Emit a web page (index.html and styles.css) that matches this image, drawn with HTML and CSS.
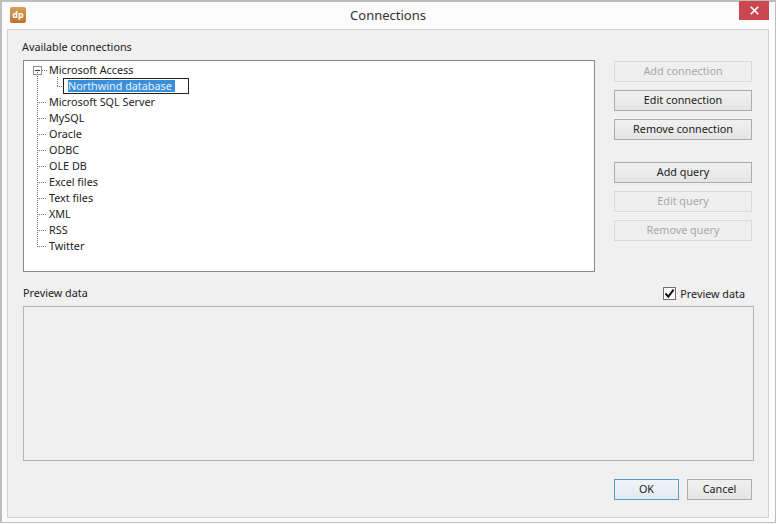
FILE: index.html
```html
<!DOCTYPE html>
<html lang="en">

<head>
	<meta charset="UTF-8">
	<meta name="viewport" content="width=device-width, initial-scale=1.0">
	<title>Connections</title>
	<link rel="stylesheet" href="styles.css">
</head>

<body>
	<div class="window">
		<header class="titlebar">
			<div class="app-icon">dp</div>
			<h1>Connections</h1>
			<div class="close-btn">
				<svg width="9" height="9" viewBox="0 0 9 9"><path d="M0.7 0.7 L8.3 8.3 M8.3 0.7 L0.7 8.3" stroke="#fff" stroke-width="1.6" fill="none" /></svg>
			</div>
		</header>

		<main class="panel">
			<div class="group-label">Available connections</div>
			<div class="top-row">
				<div class="tree">
					<div class="tree-open">
						<span class="expander"></span>
						<span class="row-text">Microsoft Access</span>
					</div>
					<div class="tree-child">
						<span class="child-line"></span>
						<span class="edit-box"><span class="selected">Northwind database</span></span>
					</div>
					<ul class="tree-list">
						<li>Microsoft SQL Server</li>
						<li>MySQL</li>
						<li>Oracle</li>
						<li>ODBC</li>
						<li>OLE DB</li>
						<li>Excel files</li>
						<li>Text files</li>
						<li>XML</li>
						<li>RSS</li>
						<li>Twitter</li>
					</ul>
				</div>
				<div class="side-buttons">
					<button class="btn" disabled>Add connection</button>
					<button class="btn">Edit connection</button>
					<button class="btn">Remove connection</button>
					<button class="btn btn-gap">Add query</button>
					<button class="btn" disabled>Edit query</button>
					<button class="btn" disabled>Remove query</button>
				</div>
			</div>

			<div class="preview-head">
				<span>Preview data</span>
				<label class="check-label">
					<span class="checkbox">
						<svg width="11" height="11" viewBox="0 0 11 11"><path d="M1.5 5.5 L4.3 8.6 L9.6 1.6" stroke="#111" stroke-width="2" fill="none" /></svg>
					</span>
					Preview data
				</label>
			</div>
			<div class="preview-box"></div>

			<div class="footer">
				<button class="btn btn-small btn-default">OK</button>
				<button class="btn btn-small">Cancel</button>
			</div>
		</main>
	</div>
</body>

</html>
```

FILE: styles.css
```css
* {
	box-sizing: border-box;
}

body {
	margin: 0;
	background: #fff;
	font-family: "Noto Sans", "Open Sans", sans-serif;
	font-size: 10.8px;
	color: #222;
}

.window {
	width: 776px;
	height: 523px;
	border: 1px solid #bdbdbd;
	border-top-width: 2px;
	border-left-width: 2px;
	background: #fbfbfb;
	display: flex;
	flex-direction: column;
	padding: 0 6px 4px 5px;
}

.titlebar {
	height: 27px;
	flex: none;
	display: grid;
	grid-template-columns: 1fr auto 1fr;
	align-items: start;
}

.titlebar h1 {
	margin: 5px 0 0;
	font-size: 13px;
	font-weight: 400;
	line-height: 17px;
	color: #333;
}

.app-icon {
	width: 16px;
	height: 16px;
	margin: 5px 0 0 3px;
	border-radius: 2px;
	background: linear-gradient(#d9a05f, #bf7326);
	color: #fff;
	font-size: 9px;
	font-weight: 700;
	line-height: 15px;
	text-align: center;
}

.close-btn {
	justify-self: end;
	width: 30px;
	height: 19px;
	margin-top: -1px;
	background: #c9484f;
	display: flex;
	align-items: center;
	justify-content: center;
}

.panel {
	flex: 1;
	background: #f0f0f0;
	border: 1px solid #d2d2d2;
	padding: 0 14px 0 15px;
	display: flex;
	flex-direction: column;
}

.group-label {
	margin: 8px 0 0 -1px;
	line-height: 17px;
	height: 22px;
}

.top-row {
	display: flex;
	gap: 19px;
}

.tree {
	width: 572px;
	height: 212px;
	border: 1px solid #8a8a8a;
	background: #fff;
	padding: 1px 0 0 9px;
	line-height: 16px;
}

.tree-open,
.tree-child {
	display: flex;
	height: 16px;
	align-items: center;
}

.expander {
	width: 9px;
	height: 9px;
	margin-right: 7px;
	border: 1px solid #8e8e8e;
	background: linear-gradient(#333, #333) center / 5px 1px no-repeat;
	flex: none;
	position: relative;
}

.expander::after {
	content: "";
	position: absolute;
	left: 8px;
	top: 3px;
	width: 6px;
	height: 1px;
	background: repeating-linear-gradient(90deg, #777 0 1px, transparent 1px 2px);
}

.tree-child {
	padding-left: 24px;
}

.child-line {
	width: 6px;
	height: 10px;
	margin-top: -8px;
	background:
		repeating-linear-gradient(#777 0 1px, transparent 1px 2px) left top / 1px 100% no-repeat,
		repeating-linear-gradient(90deg, #777 0 1px, transparent 1px 2px) left bottom / 100% 1px no-repeat;
	flex: none;
}

.edit-box {
	width: 126px;
	height: 16px;
	border: 1px solid #222;
	background: #fff;
	padding: 1px 0 0 4px;
	flex: none;
}

.selected {
	display: block;
	width: 107px;
	height: 12px;
	line-height: 12px;
	background: #3a8fdc;
	color: #eaf4ff;
	white-space: nowrap;
}

.tree-list {
	list-style: none;
	margin: -22px 0 0 4px;
	padding: 22px 0 0;
	background: repeating-linear-gradient(#777 0 1px, transparent 1px 2px) left top / 1px calc(100% - 7px) no-repeat;
}

.tree-list li {
	display: flex;
	align-items: center;
	height: 16px;
}

.tree-list li::before {
	content: "";
	width: 10px;
	height: 1px;
	margin-right: 2px;
	background: repeating-linear-gradient(90deg, #777 0 1px, transparent 1px 2px);
	flex: none;
}

.side-buttons {
	width: 138px;
	padding-top: 1px;
	display: flex;
	flex-direction: column;
	gap: 8px;
}

.btn {
	height: 21px;
	width: 138px;
	padding: 0 0 2px;
	border: 1px solid #acacac;
	background: linear-gradient(#f0f0f0, #e5e5e5);
	font: inherit;
	color: #222;
	line-height: 17px;
}

.btn:disabled {
	border-color: #d9d9d9;
	background: #efefef;
	color: #a8a8a8;
}

.btn-gap {
	margin-top: 14px;
}

.preview-head {
	display: flex;
	justify-content: space-between;
	align-items: center;
	height: 34px;
	padding: 7px 9px 0 0;
}

.check-label {
	display: flex;
	align-items: center;
	gap: 4px;
	margin-top: 2px;
}

.checkbox {
	width: 13px;
	height: 13px;
	border: 1px solid #707070;
	background: #fff;
	display: flex;
	align-items: center;
	justify-content: center;
}

.preview-box {
	height: 155px;
	border: 1px solid #b4b4b4;
}

.footer {
	display: flex;
	justify-content: flex-end;
	gap: 8px;
	margin-top: 18px;
	padding-right: 2px;
}

.btn-small {
	width: 65px;
}

.btn-default {
	border-color: #5a9bc9;
	background: linear-gradient(#eef4f8, #e2ebf2);
}
```
